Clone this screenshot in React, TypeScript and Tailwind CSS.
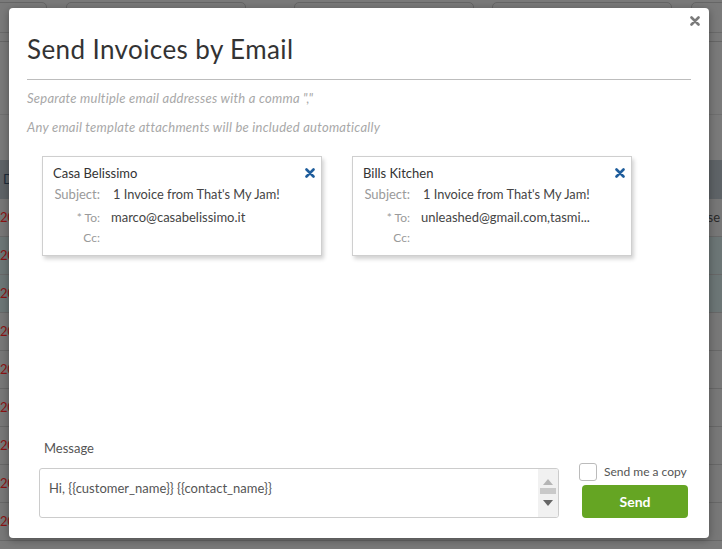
import React from "react";

const rows = [
  { bg: "bg-[#777777]", right: "se" },
  { bg: "bg-[#6c7676]", right: "" },
  { bg: "bg-[#6c7676]", right: "" },
  { bg: "bg-[#787878]", right: "" },
  { bg: "bg-[#787878]", right: "" },
  { bg: "bg-[#787878]", right: "" },
  { bg: "bg-[#787878]", right: "" },
  { bg: "bg-[#787878]", right: "" },
  { bg: "bg-[#787878]", right: "" },
];

function CloseBlue() {
  return (
    <svg width="10" height="10" viewBox="0 0 10 10">
      <path d="M1.5 1.5 L8.5 8.5 M8.5 1.5 L1.5 8.5" stroke="#1f5d9c" strokeWidth="2.6" strokeLinecap="round" />
    </svg>
  );
}

function Card({ name, to }: { name: string; to: string }) {
  return (
    <div className="w-[280px] h-[100px] border border-[#cfcfcf] bg-white shadow-[2px_3px_4px_rgba(0,0,0,0.18)] pl-[10px] pr-[5px] pt-[8px] text-[13px]">
      <div className="flex items-center justify-between h-[18px]">
        <span className="text-[#333333]">{name}</span>
        <span className="mr-[1px] -mt-[3px]"><CloseBlue /></span>
      </div>
      <div className="flex h-[22px] items-center mt-[1px]">
        <span className="w-[47px] text-right text-[#9a9a9a]">Subject:</span>
        <span className="ml-[13px] text-[#444444] text-[12.8px]">1 Invoice from That's My Jam!</span>
      </div>
      <div className="flex h-[22px] items-center mt-[1px]">
        <span className="w-[47px] text-right text-[#9a9a9a] text-[12px]">* To:</span>
        <span className="ml-[11px] text-[#444444] text-[13px]">{to}</span>
      </div>
      <div className="flex h-[18px] items-center">
        <span className="w-[47px] text-right text-[#9a9a9a] text-[12px]">Cc:</span>
      </div>
    </div>
  );
}

export default function App() {
  return (
    <div
      className="relative w-[722px] h-[549px] overflow-hidden bg-[#7a7a7a]"
      style={{ fontFamily: "Lato, 'Open Sans', sans-serif" }}
    >
      {/* dimmed page behind */}
      <div className="flex flex-col">
        <div className="h-[33px] border-b border-[#6a6a6a] flex items-start pt-[2px] -ml-[10px]">
          <div className="shrink-0 w-[57px] h-[40px] border border-[#666666] rounded-[5px]" />
          <div className="shrink-0 ml-[19px] w-[180px] h-[40px] border border-[#666666] rounded-[5px]" />
          <div className="shrink-0 ml-[48px] w-[180px] h-[40px] border border-[#666666] rounded-[5px]" />
          <div className="shrink-0 ml-[18px] w-[180px] h-[40px] border border-[#666666] rounded-[5px]" />
          <div className="shrink-0 ml-[19px] w-[60px] h-[40px] border border-[#666666] rounded-[5px]" />
        </div>
        <div className="h-[82px] border-b border-[#6f6f6f]" />
        <div className="h-[45px]" />
        <div className="h-[39px] bg-[#5e6367] flex items-center text-[13px] text-[#1d2b3a] pl-[3px]">D</div>
        {rows.map((r, i) => (
          <div key={i} className={`h-[38px] border-b border-[#686868] ${r.bg} flex items-center justify-between text-[13px]`}>
            <span className="text-[#8a1414]">20</span>
            <span className="text-[#2a2a2a] mr-[2px]">{r.right}</span>
          </div>
        ))}
      </div>

      {/* modal */}
      <div className="absolute left-[9px] top-[8px] w-[700px] h-[530px] bg-white rounded-[4px] shadow-[0_2px_8px_rgba(0,0,0,0.35)] flex flex-col px-[18px]">
        <div className="absolute right-[9px] top-[8px]">
          <svg width="10" height="10" viewBox="0 0 10 10">
            <path d="M1.5 1.5 L8.5 8.5 M8.5 1.5 L1.5 8.5" stroke="#7a7a7a" strokeWidth="2.6" strokeLinecap="round" />
          </svg>
        </div>
        <h1 className="mt-[25px] text-[26px] leading-[32px] text-[#333333] font-normal tracking-[0.4px]">Send Invoices by Email</h1>
        <div className="mt-[14px] border-t border-[#bdbdbd]" />
        <p className="mt-[9px] text-[13px] italic text-[#a8a8a8] leading-[18px] tracking-[0.25px]">Separate multiple email addresses with a comma ","</p>
        <p className="mt-[11px] text-[13px] italic text-[#a8a8a8] leading-[18px] tracking-[0.25px]">Any email template attachments will be included automatically</p>
        <div className="mt-[20px] ml-[15px] flex gap-[30px]">
          <Card name="Casa Belissimo" to="marco@casabelissimo.it" />
          <Card name="Bills Kitchen" to="unleashed@gmail.com,tasmi..." />
        </div>
        <div className="flex-1" />
        <div className="flex items-end gap-[21px] pb-[20px] pl-[12px]">
          <div className="flex flex-col">
            <div className="pl-[5px] text-[13px] text-[#555555] leading-[18px] mb-[11px]">Message</div>
            <div className="w-[520px] h-[50px] border border-[#cccccc] rounded-[3px] flex overflow-hidden">
              <div className="flex-1 pl-[9px] pt-[10px] text-[13px] text-[#555555]">Hi, {"{{customer_name}}"} {"{{contact_name}}"}</div>
              <div className="w-[20px] bg-[#f1f1f1] flex flex-col items-center pt-[10px]">
                <svg width="10" height="6" viewBox="0 0 10 6"><path d="M0 6 L5 0 L10 6 Z" fill="#b5b5b5" /></svg>
                <div className="w-[16px] h-[6px] bg-[#c9c9c9] mt-[3px]" />
                <svg className="mt-[6px]" width="10" height="6" viewBox="0 0 10 6"><path d="M0 0 L10 0 L5 6 Z" fill="#666666" /></svg>
              </div>
            </div>
          </div>
          <div className="flex flex-col items-start -ml-[1px]">
            <div className="flex items-center">
              <div className="w-[18px] h-[18px] border border-[#bbbbbb] rounded-[3px] bg-white" />
              <span className="ml-[7px] text-[12px] text-[#555555]">Send me a copy</span>
            </div>
            <button className="mt-[4px] ml-[3px] w-[106px] h-[33px] bg-[#65a523] rounded-[4px] text-white font-bold text-[14px]">Send</button>
          </div>
        </div>
      </div>
    </div>
  );
}
